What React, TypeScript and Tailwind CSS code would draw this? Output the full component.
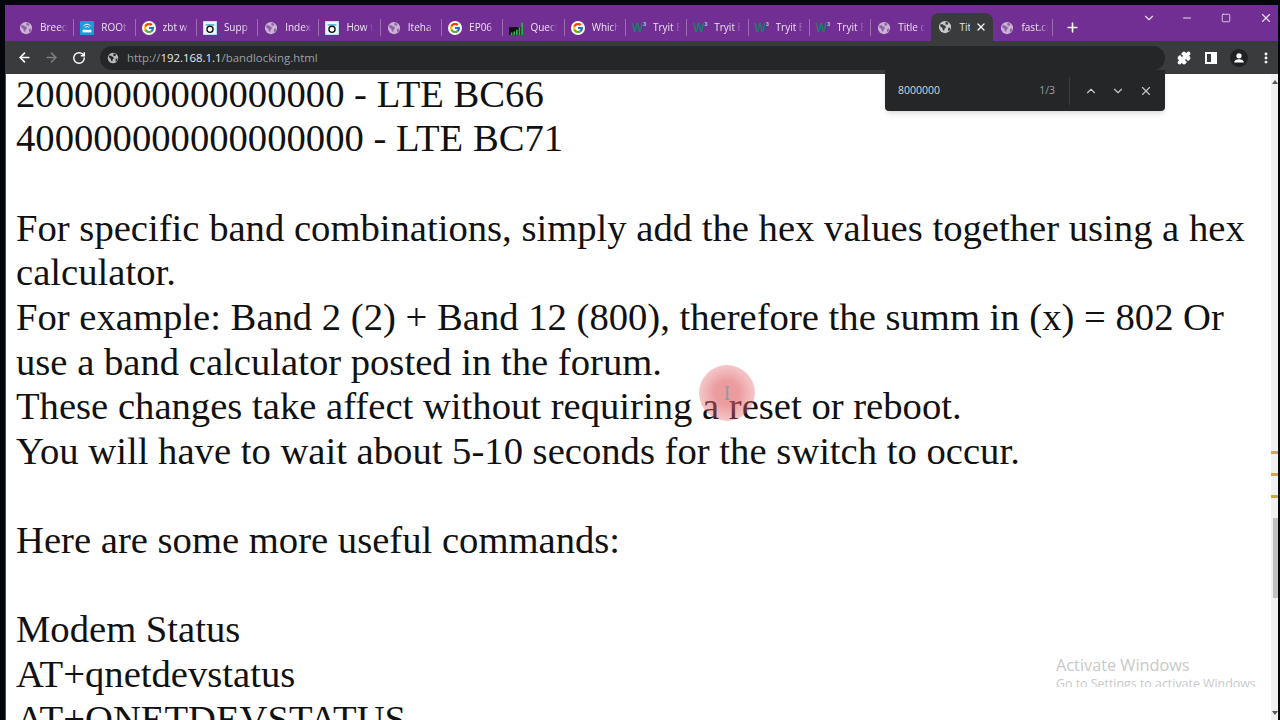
import React from 'react';
import { ArrowLeft, ArrowRight, RotateCw, ChevronDown, ChevronUp, Minus, Square, X, Plus, Puzzle, EllipsisVertical } from 'lucide-react';
import { FcGoogle } from 'react-icons/fc';

function Globe({ className = '', land = '#8f62a8' }: { className?: string; land?: string }) {
  return (
    <svg viewBox="0 0 16 16" className={className}>
      <circle cx="8" cy="8" r="7" fill="currentColor" />
      <path d="M2.500 5l2.500-.5 1.500 1.500 2 .5.500 2-1.500 1.500-.5 2.500-1.500-1-.5-2.500-2.500-2zM8.500 2l3.500 1-1 2.500-2.500-.5zM11.500 9l2.500-.5-.5 3-2 1.500z" fill={land} />
    </svg>
  );
}

function Router() {
  return (
    <svg viewBox="0 0 16 16" className="w-[14px] h-[14px]">
      <rect width="16" height="16" rx="1" fill="#1e9bd7" />
      <path d="M4 5.500a6 6 0 0 1 8 0M5.500 7.500a3.500 3.500 0 0 1 5 0" stroke="#fff" fill="none" />
      <rect x="3" y="10" width="10" height="3" fill="#fff" />
    </svg>
  );
}

function Ring() {
  return (
    <svg viewBox="0 0 16 16" className="w-[14px] h-[14px]">
      <rect width="16" height="16" fill="#eaf6fb" stroke="#6fc0dc" />
      <path d="M3 4.500h10" stroke="#3aa6cc" strokeWidth="1.500" />
      <circle cx="8" cy="9.500" r="3.500" fill="#fff" stroke="#111" strokeWidth="1.500" />
    </svg>
  );
}

function Bars() {
  return (
    <svg viewBox="0 0 16 16" className="w-[14px] h-[14px]">
      <rect y="7" width="16" height="9" fill="#111" />
      <path d="M2 16v-3h2v3zM5 16v-4h2v4zM8 16v-6h2v6zM11 16v-9h2v9zM14 16v-14h2v14z" fill="#35a853" />
    </svg>
  );
}

function W3() {
  return (
    <span className="w-[14px] h-[14px] flex items-center text-[#1a7a6c] text-[12px] font-bold leading-none font-['Liberation_Sans',sans-serif]">
      W<span className="text-[5px] -mt-[6px] text-[#b9d8d0]">3</span>
    </span>
  );
}

const tabs = [
  { t: 'Breed', i: 'globe' },
  { t: 'ROOt', i: 'router' },
  { t: 'zbt w', i: 'google' },
  { t: 'Supp', i: 'ring' },
  { t: 'Index', i: 'globe' },
  { t: 'How t', i: 'ring' },
  { t: 'Iteha', i: 'globe' },
  { t: 'EP06', i: 'google' },
  { t: 'Quect', i: 'bars' },
  { t: 'Which', i: 'google' },
  { t: 'Tryit E', i: 'w3' },
  { t: 'Tryit E', i: 'w3' },
  { t: 'Tryit E', i: 'w3' },
  { t: 'Tryit E', i: 'w3' },
  { t: 'Title c', i: 'globe' },
];

function TabIcon({ kind }: { kind: string }) {
  if (kind === 'router') return <Router />;
  if (kind === 'ring') return <Ring />;
  if (kind === 'bars') return <Bars />;
  if (kind === 'w3') return <W3 />;
  if (kind === 'google') {
    return (
      <span className="w-[14px] h-[14px] rounded-full bg-white flex items-center justify-center">
        <FcGoogle size={12} />
      </span>
    );
  }
  return <Globe className="w-[14px] h-[14px] text-[#c9b3d3]" />;
}

function Tab({ title, icon }: { title: string; icon: string }) {
  return (
    <div className="w-[61.300px] h-[17px] mt-[9px] shrink-0 flex items-center pl-[6px] gap-[7px] border-r border-[#9c6db0]">
      <TabIcon kind={icon} />
      <span className="w-[27px] overflow-hidden whitespace-nowrap text-[10px] text-[#ece3f0] [mask-image:linear-gradient(to_right,black_70%,transparent)]">{title}</span>
    </div>
  );
}

const lines = [
  '20000000000000000 - LTE BC66',
  '400000000000000000 - LTE BC71',
  '',
  'For specific band combinations, simply add the hex values together using a hex',
  'calculator.',
  'For example: Band 2 (2) + Band 12 (800), therefore the summ in (x) = 802 Or',
  'use a band calculator posted in the forum.',
  'These changes take affect without requiring a reset or reboot.',
  'You will have to wait about 5-10 seconds for the switch to occur.',
  '',
  'Here are some more useful commands:',
  '',
  'Modem Status',
  'AT+qnetdevstatus',
  'AT+QNETDEVSTATUS',
];

export default function App() {
  return (
    <div className="relative w-[1280px] h-[720px] overflow-hidden bg-[#03060b] pl-[5px] pr-[2px] flex flex-col font-['Open_Sans',sans-serif]">
      {/* top of the window */}
      <div className="h-[5px] shrink-0" />

      {/* tab strip */}
      <div className="h-[36px] shrink-0 bg-[#722f93] flex items-center pl-[8px]">
        {tabs.map((tab, i) => (
          <Tab key={i} title={tab.t} icon={tab.i} />
        ))}
        <div className="w-[62px] h-[28px] mt-[8px] shrink-0 -ml-px bg-[#3a3b3d] rounded-t-lg flex items-center pl-[7px] gap-[7px]">
          <Globe className="w-[14px] h-[14px] text-[#c8c9cb]" land="#3a3b3d" />
          <span className="text-[10px] text-[#ece3f0] w-[11px] overflow-hidden whitespace-nowrap">Tit</span>
          <X size={12} strokeWidth={2.500} className="text-white -ml-[2px]" />
        </div>
        <div className="w-[60px] h-[17px] mt-[9px] shrink-0 flex items-center pl-[7px] gap-[7px] border-r border-[#9c6db0]">
          <Globe className="w-[14px] h-[14px] text-[#c9b3d3]" />
          <span className="w-[27px] overflow-hidden whitespace-nowrap text-[10px] text-[#ece3f0] [mask-image:linear-gradient(to_right,black_70%,transparent)]">fast.com</span>
        </div>
        <Plus size={15} strokeWidth={2.500} className="text-white ml-[12px] mt-[9px]" />
        <div className="ml-auto flex items-center self-start mt-[6px] text-[#e6dcec]">
          <ChevronDown size={14} className="mr-[25px]" />
          <Minus size={12} className="mr-[28px]" />
          <Square size={10} className="mr-[28px]" />
          <X size={14} className="mr-[5px]" />
        </div>
      </div>

      {/* toolbar */}
      <div className="h-[33px] shrink-0 bg-[#3a3b3d] flex items-center pl-[12px]">
        <ArrowLeft size={15} strokeWidth={2.500} className="text-white" />
        <ArrowRight size={15} strokeWidth={2.500} className="text-[#7d7e80] ml-[12px]" />
        <RotateCw size={14} strokeWidth={2.500} className="text-white ml-[13px]" />
        <div className="ml-[14px] w-[1065px] h-[24px] rounded-full bg-[#242628] flex items-center pl-[7px]">
          <Globe className="w-[12px] h-[12px] text-[#b9babc]" land="#242628" />
          <span className="ml-[8px] text-[11.400px] text-[#9aa0a6]">
            http://<span className="text-[#e8eaed]">192.168.1.1</span>/bandlocking.html
          </span>
        </div>
        <Puzzle size={14} fill="currentColor" className="text-white ml-[12px]" />
        <div className="ml-[14px] w-[12px] h-[12px] border-2 border-white bg-[#3a3b3d] flex justify-end">
          <div className="w-[4px] bg-white" />
        </div>
        <div className="ml-[13px] w-[18px] h-[18px] rounded-full bg-[#202124] flex items-center justify-center">
          <svg viewBox="0 0 16 16" className="w-[12px] h-[12px]">
            <circle cx="8" cy="5" r="3.500" fill="#fff" />
            <path d="M1.500 14c0-3 3-4.500 6.500-4.500s6.500 1.500 6.500 4.500z" fill="#fff" />
          </svg>
        </div>
        <EllipsisVertical size={14} strokeWidth={3} className="text-white ml-[11px]" />
      </div>

      {/* page */}
      <div className="flex-1 min-h-0 flex overflow-hidden bg-white border-l border-[#722f93]">
        <div className="flex-1 pl-[10px] -mt-[2.300px] font-['Liberation_Serif',serif] text-[38.650px] leading-[44.650px] text-[#111] whitespace-nowrap">
          {lines.map((l, i) => (
            <div key={i} className="h-[44.650px]">{l}</div>
          ))}
        </div>
        <div className="relative w-[7px] shrink-0 bg-[#f1f1f1]">
          <div className="absolute right-0 top-[444px] w-[5px] h-[80px] bg-[#c1c1c1]" />
          <div className="absolute left-0 top-[377px] w-[7px] h-[3px] bg-[#d9a441]" />
          <div className="absolute left-0 top-[399px] w-[7px] h-[3px] bg-[#d9a441]" />
          <div className="absolute left-0 top-[421px] w-[7px] h-[3px] bg-[#c9a83c]" />
          <div className="absolute right-0 top-[6px] border-x-[3px] border-b-[4px] border-x-transparent border-b-[#555]" />
          <div className="absolute right-0 bottom-[5px] border-x-[3px] border-t-[4px] border-x-transparent border-t-[#555]" />
        </div>
      </div>

      {/* find bar */}
      <div className="absolute left-[885px] top-[70px] w-[280px] h-[41px] bg-[#242628] rounded-b flex items-center pl-[13px] shadow-md">
        <span className="w-[117px] text-[10.500px] text-[#d8d8d8]">8000000</span>
        <span className="ml-[10px] w-[30px] text-right text-[10.500px] text-[#9aa0a6]">1/3</span>
        <div className="ml-[14px] w-px h-[28px] bg-[#3c4043]" />
        <ChevronUp size={14} className="text-[#c4c7c5] ml-[14px]" />
        <ChevronDown size={14} className="text-[#c4c7c5] ml-[13px]" />
        <X size={14} className="text-[#c4c7c5] ml-[14px]" />
      </div>

      {/* recording cursor highlight */}
      <div className="absolute left-[699px] top-[365px] w-[56px] h-[56px] rounded-full bg-[radial-gradient(circle,rgba(222,90,95,0.6)_30%,rgba(222,90,95,0.35)_68%,rgba(222,90,95,0)_100%)] flex items-center justify-center">
        <span className="text-[21px] text-[#999] leading-none font-['Liberation_Serif',serif]">I</span>
      </div>

      {/* watermark */}
      <div className="absolute left-[1056px] top-[654px] h-[38px] overflow-hidden text-[#c9c9c9]">
        <div className="text-[16.300px] leading-[22px]">Activate Windows</div>
        <div className="text-[12.400px] leading-[17px] h-[12px] overflow-hidden -mt-px">Go to Settings to activate Windows</div>
      </div>
    </div>
  );
}
